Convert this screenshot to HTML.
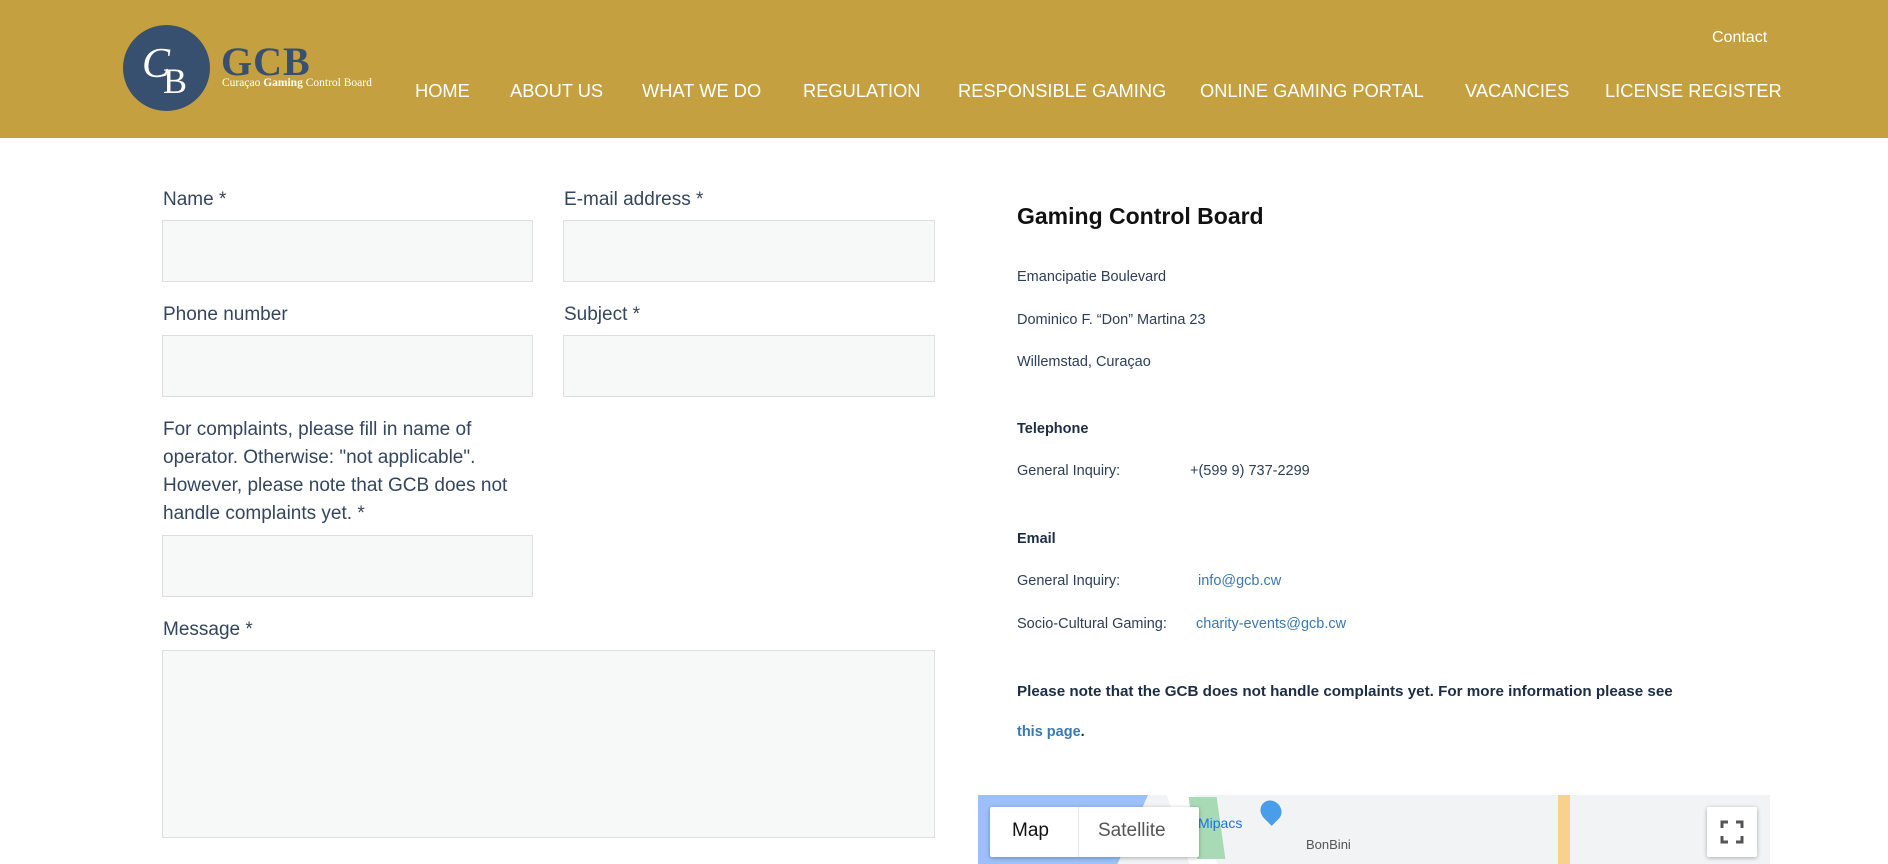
<!DOCTYPE html>
<html><head><meta charset="utf-8"><style>
*{margin:0;padding:0;box-sizing:border-box}
body{width:1888px;height:864px;overflow:hidden;background:#fff;font-family:"Liberation Sans",sans-serif;position:relative}
.a{position:absolute;white-space:nowrap}
header{position:absolute;left:0;top:0;width:1888px;height:138px;background:#c4a040}
.nav{top:80px;color:#fff;font-size:18.3px}
.lab{color:#34465e;font-size:19px}
.in{position:absolute;background:#f7f8f8;border:1px solid #dedede}
.r{color:#2c3e58;font-size:14.5px}
.b{font-weight:bold;color:#1d2d44}
.lk{color:#3a78b0}
</style></head><body>
<header>
<div class="a" style="left:123px;top:25px;width:87px;height:86px;border-radius:50%;background:#38506f"></div>
<div class="a" style="left:142px;top:40px;color:#fff;font-family:'Liberation Serif',serif;font-size:42px;font-style:italic">C</div>
<div class="a" style="left:163px;top:60px;color:#fff;font-family:'Liberation Serif',serif;font-size:36px">B</div>
<div class="a" style="left:221px;top:38px;color:#38506f;font-family:'Liberation Serif',serif;font-size:40px;font-weight:bold;letter-spacing:1px">GCB</div>
<div class="a" style="left:222px;top:77px;color:#fff;font-family:'Liberation Serif',serif;font-size:11.5px">Curaçao <b>Gaming</b> Control Board</div>
<div class="a" style="left:1712px;top:29px;color:#fff;font-size:16px">Contact</div>
<div class="a nav" style="left:415px">HOME</div>
<div class="a nav" style="left:510px">ABOUT US</div>
<div class="a nav" style="left:642px">WHAT WE DO</div>
<div class="a nav" style="left:803px">REGULATION</div>
<div class="a nav" style="left:958px">RESPONSIBLE GAMING</div>
<div class="a nav" style="left:1200px">ONLINE GAMING PORTAL</div>
<div class="a nav" style="left:1465px">VACANCIES</div>
<div class="a nav" style="left:1605px">LICENSE REGISTER</div>
</header>

<div class="a lab" style="left:163px;top:189px">Name *</div>
<div class="a lab" style="left:564px;top:189px">E-mail address *</div>
<div class="in" style="left:162px;top:220px;width:371px;height:62px"></div>
<div class="in" style="left:563px;top:220px;width:372px;height:62px"></div>
<div class="a lab" style="left:163px;top:304px">Phone number</div>
<div class="a lab" style="left:564px;top:304px">Subject *</div>
<div class="in" style="left:162px;top:335px;width:371px;height:62px"></div>
<div class="in" style="left:563px;top:335px;width:372px;height:62px"></div>
<div class="a lab" style="left:163px;top:416px;line-height:28px;white-space:normal;width:380px">For complaints, please fill in name of operator. Otherwise: "not applicable". However, please note that GCB does not handle complaints yet. *</div>
<div class="in" style="left:162px;top:535px;width:371px;height:62px"></div>
<div class="a lab" style="left:163px;top:619px">Message *</div>
<div class="in" style="left:162px;top:650px;width:773px;height:188px"></div>

<div class="a" style="left:1017px;top:203px;font-size:23px;font-weight:bold;color:#111">Gaming Control Board</div>
<div class="a r" style="left:1017px;top:269px">Emancipatie Boulevard</div>
<div class="a r" style="left:1017px;top:312px">Dominico F. “Don” Martina 23</div>
<div class="a r" style="left:1017px;top:354px">Willemstad, Curaçao</div>
<div class="a r b" style="left:1017px;top:421px">Telephone</div>
<div class="a r" style="left:1017px;top:463px">General Inquiry:</div>
<div class="a r" style="left:1190px;top:463px">+(599 9) 737-2299</div>
<div class="a r b" style="left:1017px;top:531px">Email</div>
<div class="a r" style="left:1017px;top:573px">General Inquiry:</div>
<div class="a r lk" style="left:1198px;top:573px">info@gcb.cw</div>
<div class="a r" style="left:1017px;top:616px">Socio-Cultural Gaming:</div>
<div class="a r lk" style="left:1196px;top:616px">charity-events@gcb.cw</div>
<div class="a r b" style="left:1017px;top:683px;font-size:15.2px">Please note that the GCB does not handle complaints yet. For more information please see</div>
<div class="a r b" style="left:1017px;top:724px"><span class="lk">this page</span>.</div>

<div class="a" style="left:978px;top:795px;width:792px;height:69px;background:#f1f3f4;overflow:hidden">
<div class="a" style="left:0;top:0;width:170px;height:69px;background:#9cc0f9;clip-path:polygon(0 0,100% 0,82% 100%,0 100%)"></div>
<div class="a" style="left:200px;top:0;width:28px;height:69px;background:#fff;transform:skewX(18deg)"></div>
<div class="a" style="left:215px;top:2px;width:28px;height:62px;background:#a8dab5;transform:skewX(8deg)"></div>
<div class="a" style="left:580px;top:0;width:12px;height:69px;background:#f6d28a"></div>
<div class="a" style="left:220px;top:20px;color:#1a73e8;font-size:14px">Mipacs</div>
<div class="a" style="left:283px;top:5px;width:20px;height:22px;border-radius:50% 50% 50% 0;background:#4a9de8;transform:rotate(-45deg)"></div>
<div class="a" style="left:328px;top:42px;color:#555;font-size:13px">BonBini</div>
<div class="a" style="left:184px;top:80px;width:60px;height:60px;border-radius:50%;background:#38506f"></div>
</div>
<div class="a" style="left:990px;top:807px;width:209px;height:50px;background:#fff;border-radius:2px;box-shadow:0 1px 4px rgba(0,0,0,.3)"></div>
<div class="a" style="left:1078px;top:807px;width:1px;height:50px;background:#e6e6e6"></div>
<div class="a" style="left:1012px;top:820px;font-size:19px;color:#111">Map</div>
<div class="a" style="left:1098px;top:820px;font-size:19px;color:#555">Satellite</div>
<div class="a" style="left:1707px;top:807px;width:50px;height:50px;background:#fff;border-radius:2px;box-shadow:0 1px 4px rgba(0,0,0,.3)"></div>
<svg class="a" style="left:1720px;top:820px" width="24" height="24" viewBox="0 0 24 24" fill="none" stroke="#555" stroke-width="3"><path d="M2 8V2h6M16 2h6v6M22 16v6h-6M8 22H2v-6"/></svg>
</body></html>
